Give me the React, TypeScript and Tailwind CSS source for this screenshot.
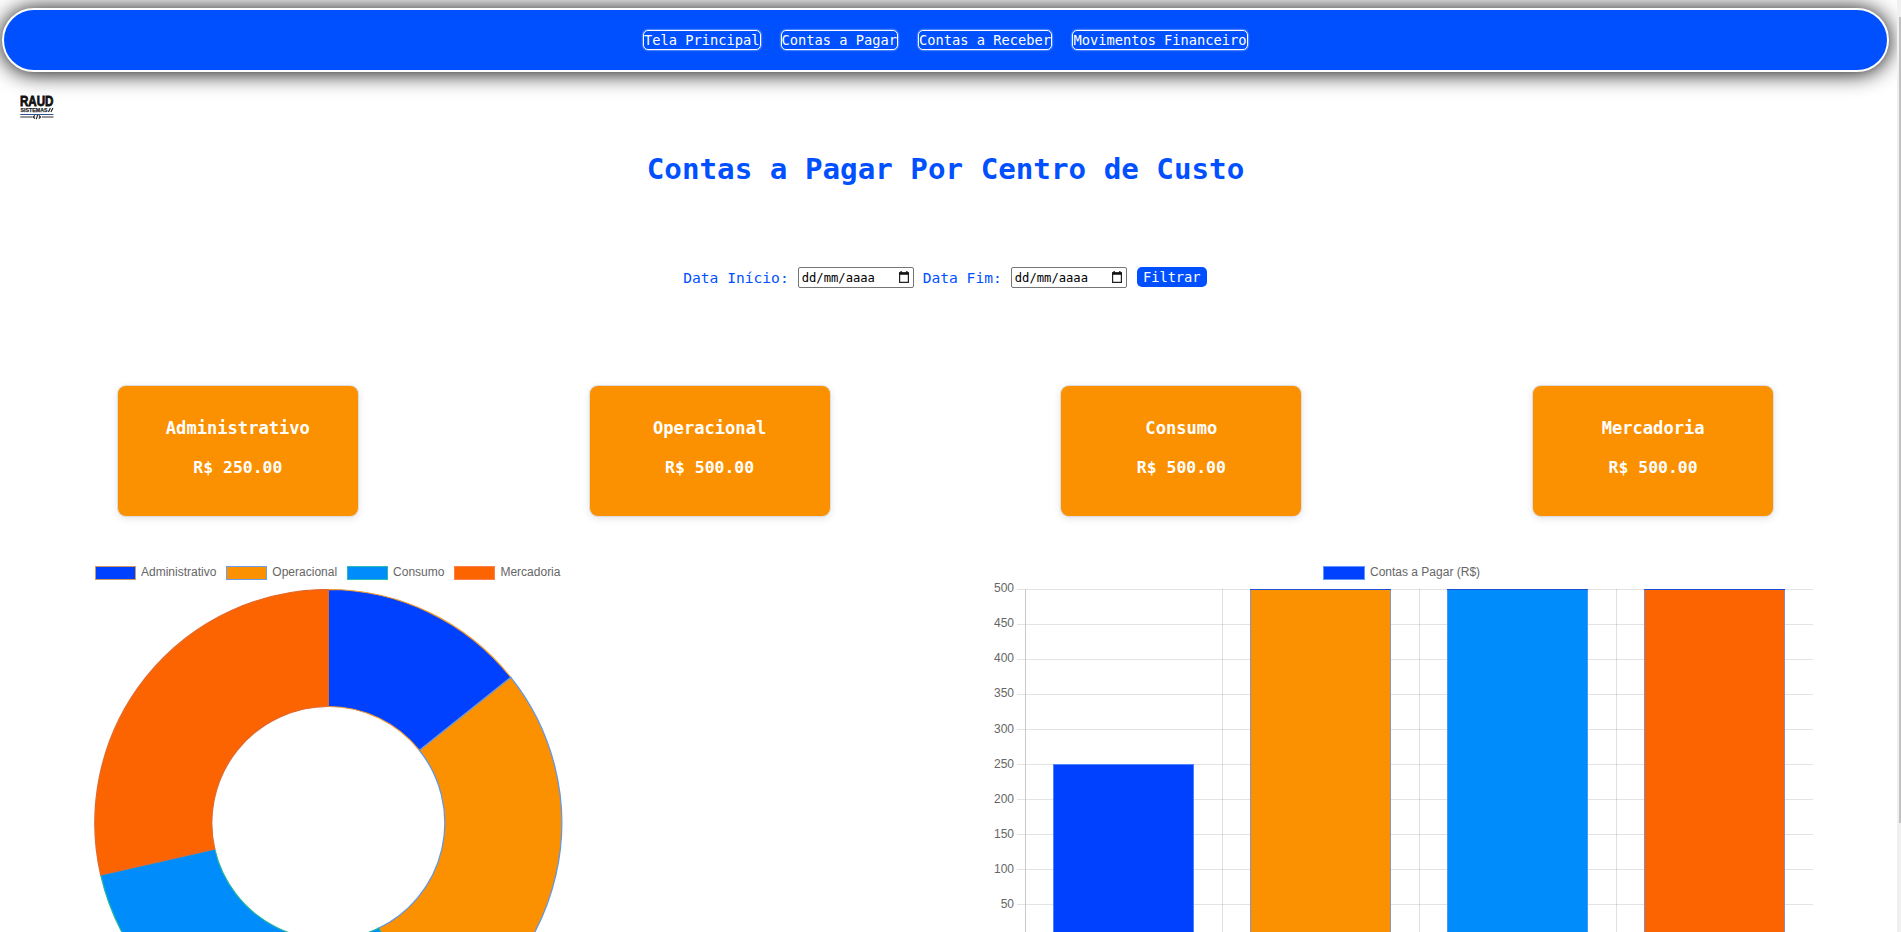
import React from "react";

const MONO = "font-['DejaVu_Sans_Mono',monospace]";
const NAV = ["Tela Principal", "Contas a Pagar", "Contas a Receber", "Movimentos Financeiro"];
const NAV_WIDTHS = ["w-[117.5px]", "w-[117.5px]", "w-[134px]", "w-[176px]"];

const CARDS = [
  { name: "Administrativo", value: 250 },
  { name: "Operacional", value: 500 },
  { name: "Consumo", value: 500 },
  { name: "Mercadoria", value: 500 },
];
const FILLS = ["#0040ff", "#fb9000", "#008dfb", "#fb6400"];
const STROKES = ["#f09a30", "#5a96f0", "#28b89a", "#e2682c"];
const LEGEND_BORDERS = ["border-[#d09a5c]", "border-[#6b9fe8]", "border-[#2cbcae]", "border-[#fb824a]"];
const LEGEND_FILLS = ["bg-[#0040ff]", "bg-[#fb9000]", "bg-[#008dfb]", "bg-[#fb6400]"];

function Logo() {
  return (
    <svg width="40" height="27" viewBox="0 -3 40 27" className="-mt-[3px] block">
      <text x="0" y="10.2" textLength="33.5" lengthAdjust="spacingAndGlyphs" fontFamily="Liberation Sans" fontWeight="700" fontSize="14" fill="#111" stroke="#111" strokeWidth=".8">RAUD</text>
      <text x="0.6" y="15.8" textLength="27" lengthAdjust="spacingAndGlyphs" fontFamily="Liberation Sans" fontWeight="700" fontSize="5.8" fill="#222" stroke="#222" strokeWidth=".25">SISTEMAS</text>
      <path d="M28.4 16l2-4M30.9 16l2-4" stroke="#222" strokeWidth="1.2" />
      <path d="M.3 18.5h33.2" stroke="#2f5590" strokeWidth="1" />
      <path d="M.3 21h12M22 21h11.5" stroke="#777" strokeWidth="1.6" />
      <path d="M15 19.5l-1.8 1.5 1.8 1.5M18.8 19.5l1.8 1.5-1.8 1.5M17.6 19l-1.3 4.2" stroke="#222" strokeWidth="1.1" fill="none" />
    </svg>
  );
}

function Donut() {
  const R = 233.5, r = 116.5, c = 234.3, cy = 234;
  let a = -Math.PI / 2;
  return (
    <svg width="470" height="470" viewBox="0 0 470 470" className="block">
      {CARDS.map((d, i) => {
        const b = a + (d.value / 1750) * Math.PI * 2;
        const large = b - a > Math.PI ? 1 : 0;
        const p = (q: number, t: number) => `${c + q * Math.cos(t)} ${cy + q * Math.sin(t)}`;
        const path = `M${p(R, a)}A${R} ${R} 0 ${large} 1 ${p(R, b)}L${p(r, b)}A${r} ${r} 0 ${large} 0 ${p(r, a)}Z`;
        a = b;
        return <path key={d.name} d={path} fill={FILLS[i]} stroke={STROKES[i]} strokeWidth="1.2" />;
      })}
    </svg>
  );
}

function BarChart() {
  const ticks = [500, 450, 400, 350, 300, 250, 200, 150, 100, 50];
  return (
    <svg width="830" height="380" viewBox="0 0 830 380" className="-mt-px block">
      {ticks.map((t, i) => (
        <g key={t}>
          <path d={`M27 ${10.5 + i * 35}H823`} stroke="#e3e3e3" />
          <text x="24" y={(i < 4 ? 13 : 14) + i * 35} textAnchor="end" fontFamily="Liberation Sans" fontSize="12" fill="#666">{t}</text>
        </g>
      ))}
      <path d="M35.5 10V380" stroke="#c8c8c8" />
      {[232.5, 429.5, 626.5].map((x) => <path key={x} d={`M${x} 10V380`} stroke="#000" strokeOpacity=".12" />)}
      {CARDS.map((d, i) => {
        const x = 63 + i * 197;
        const top = 10 + (500 - d.value) * 0.7;
        return (
          <g key={d.name}>
            <rect x={x} y={top} width="141" height="400" fill={FILLS[i]} />
            <path d={`M${x + 0.5} 380V${top}M${x + 140.5} 380V${top}`} stroke="#6496ff" strokeOpacity=".75" />
            <path d={`M${x} ${top + 0.5}h141`} stroke={i ? "#1c50d2" : "#4f86ff"} />
          </g>
        );
      })}
    </svg>
  );
}

function DateField() {
  return (
    <span className="flex h-[21px] w-[116px] items-center justify-between rounded-[2px] border border-[#767676] bg-white pr-1 pl-[3px] text-[12.18px] text-black">
      <span className="pt-px">dd/mm/aaaa</span>
      <svg width="10" height="12" viewBox="0 0 10 12" className="mb-px">
        <path d="M.6 2h8.8v9.4H.6z" fill="none" stroke="#222" strokeWidth="1.2" />
        <path d="M0 1.2h10v2.6H0zM1.5 0h1.3v2H1.5zM7.2 0h1.3v2H7.2z" fill="#111" />
      </svg>
    </span>
  );
}

export default function App() {
  return (
    <div className={`relative h-[932px] w-full overflow-hidden bg-white ${MONO}`}>
      <div className="ml-[2px] w-[1887px] pt-2">
        <header className="flex h-16 items-start justify-center gap-5 rounded-[32px] border-2 border-white bg-[#0050ff] pt-5 shadow-[0_1px_22px_#000]">
          {NAV.map((n, i) => (
            <a key={n} className={`flex h-5 items-center justify-center rounded-[5px] border border-white text-[13.7px] whitespace-nowrap text-white shadow-[0_0_2px_#fff] ${NAV_WIDTHS[i]}`}>{n}</a>
          ))}
        </header>
        <div className="h-12 pt-6 pl-[18px]"><Logo /></div>
        <h1 className="mt-[29px] h-10 text-center text-[29.2px] leading-10 font-bold text-[#0050ff]">Contas a Pagar Por Centro de Custo</h1>
        <div className="mt-[78px] flex h-[21px] items-center justify-center pr-px text-[14.6px] text-[#0050ff]">
          <span className="mr-[9px] whitespace-nowrap">Data Início:</span>
          <DateField />
          <span className="mr-[9px] ml-[9px] whitespace-nowrap">Data Fim:</span>
          <DateField />
          <button className="mb-px ml-[10px] flex h-5 w-[70px] items-center justify-center rounded-[5px] bg-[#0050ff] text-[13.7px] text-white">Filtrar</button>
        </div>
        <div className="mt-[98px] grid grid-cols-4">
          {CARDS.map((c) => (
            <div key={c.name} className="mx-auto flex h-[130px] w-60 flex-col items-center rounded-lg bg-[#fb9000] pt-[30px] font-bold text-white shadow-[0_0_0_1px_#ddd,0_2px_9px_rgba(0,0,0,0.13)]">
              <h3 className="h-6 text-[17.1px] leading-6">{c.name}</h3>
              <p className="mt-4 h-6 text-[16.45px] leading-6">R$ {c.value.toFixed(2)}</p>
            </div>
          ))}
        </div>
        <div className="mt-[49px] flex font-['Liberation_Sans',sans-serif] text-xs leading-[15px] text-[#666]">
          <section className="w-[896px] pl-[92px]">
            <div className="flex h-6 pl-px">
              {CARDS.map((c, i) => (
                <div key={c.name} className="mr-[10px] flex h-[15px]">
                  <span className={`mt-px mr-[5px] h-[14px] w-[41px] border ${LEGEND_BORDERS[i]} ${LEGEND_FILLS[i]}`} />
                  <span>{c.name}</span>
                </div>
              ))}
            </div>
            <Donut />
          </section>
          <section className="pl-[92px]">
            <div className="flex h-[15px] pl-[333px]">
              <span className="mt-px mr-[5px] h-[14px] w-[42px] border border-[#6496ff] bg-[#0040ff]" />
              <span>Contas a Pagar (R$)</span>
            </div>
            <BarChart />
          </section>
        </div>
      </div>
      <div className="absolute top-0 right-0 h-full w-1 bg-[#f0f0f0]">
        <div className="mt-[17px] ml-[2px] h-[806px] bg-[#c1c1c1]" />
      </div>
    </div>
  );
}
